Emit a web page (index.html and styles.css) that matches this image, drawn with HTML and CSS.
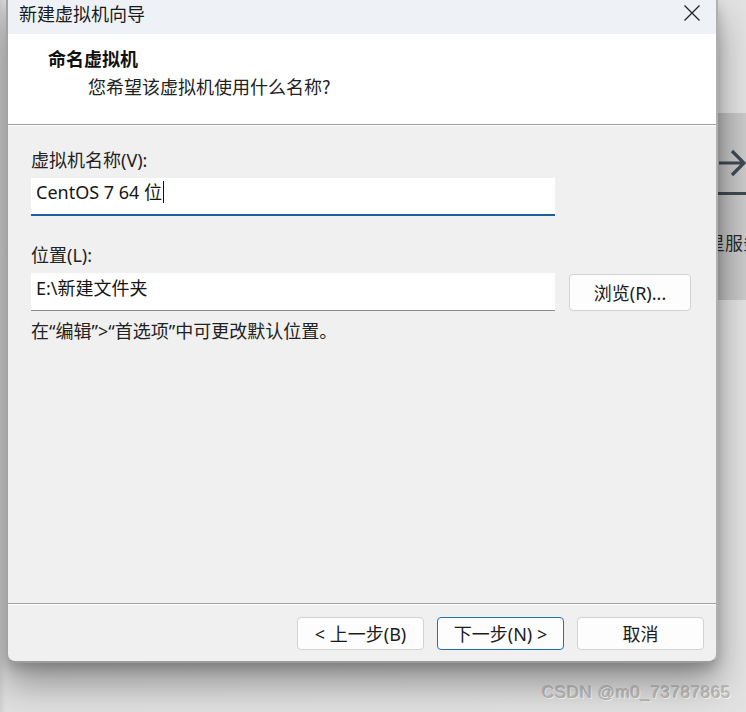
FILE: index.html
```html
<!DOCTYPE html>
<html lang="zh-CN">
<head>
<meta charset="utf-8">
<title>新建虚拟机向导</title>
<link rel="stylesheet" href="styles.css">
</head>
<body>
<div class="screen">
  <div class="behind">
    <svg class="behind-arrow" width="29" height="50" viewBox="0 0 29 50">
      <path d="M2 16 H26 M15 4 L27 16 L15 28" fill="none" stroke="#3e4954" stroke-width="3.2"/>
      <rect x="1" y="45" width="28" height="3" fill="#3e4954"/>
    </svg>
    <div class="behind-text">星服务</div>
  </div>

  <div class="dialog">
    <div class="titlebar">
      <span class="title">新建虚拟机向导</span>
      <svg class="close" width="18" height="18" viewBox="0 0 18 18">
        <path d="M1.5 1.5 L16.5 16.5 M16.5 1.5 L1.5 16.5" stroke="#222" stroke-width="1.3" fill="none"/>
      </svg>
    </div>
    <div class="header">
      <div class="heading">命名虚拟机</div>
      <div class="subheading">您希望该虚拟机使用什么名称?</div>
    </div>
    <div class="content">
      <div class="label">虚拟机名称(V):</div>
      <div class="field field-focus"><span class="value">CentOS 7 64 位</span><span class="caret"></span></div>
      <div class="label label-loc">位置(L):</div>
      <div class="row">
        <div class="field"><span class="value">E:\新建文件夹</span></div>
        <div class="btn btn-browse">浏览(R)...</div>
      </div>
      <div class="hint">在“编辑”&gt;“首选项”中可更改默认位置。</div>
    </div>
    <div class="footer">
      <div class="btn">&lt; 上一步(B)</div>
      <div class="btn btn-default">下一步(N) &gt;</div>
      <div class="btn">取消</div>
    </div>
  </div>

  <div class="watermark">CSDN @m0_73787865</div>
</div>
</body>
</html>
```

FILE: styles.css
```css
* { box-sizing: border-box; }

html, body {
  margin: 0;
  padding: 0;
}

body {
  width: 746px;
  height: 712px;
  overflow: hidden;
  background: #e9e9e9;
  font-family: "Noto Sans", "Noto Sans CJK SC", sans-serif;
  color: #1c1c1c;
}

.screen {
  position: relative;
  width: 746px;
  height: 712px;
  background: linear-gradient(90deg, #d0d0d0 0px, #e0e0e0 6px, #e2e2e2 100%);
}

.behind {
  position: absolute;
  left: 717px;
  top: 113px;
  width: 29px;
  height: 187px;
  background: linear-gradient(90deg, #bdbdbd, #cacaca);
  overflow: hidden;
}

.behind-arrow {
  display: block;
  margin-top: 34px;
}

.behind-text {
  margin-left: -10px;
  margin-top: 35px;
  width: 60px;
  font-family: "Noto Sans CJK SC", sans-serif;
  font-size: 18px;
  line-height: 20px;
  color: #2a2a2a;
  white-space: nowrap;
}

.dialog {
  position: relative;
  z-index: 1;
  margin-left: 6px;
  width: 712px;
  height: 663px;
  display: flex;
  flex-direction: column;
  background: #f0f0f0;
  border-left: 2px solid #a3a3a3;
  border-right: 2px solid #b0b0b0;
  border-bottom: 2px solid #9c9c9c;
  border-radius: 0 0 9px 9px;
  box-shadow: 0 20px 36px rgba(0, 0, 0, 0.36), 0 5px 12px rgba(0, 0, 0, 0.18);
}

.titlebar {
  height: 34px;
  flex: none;
  display: flex;
  align-items: center;
  justify-content: space-between;
  padding: 0 15px 0 11px;
  background: #eef2f7;
}

.title {
  font-family: "Noto Sans CJK SC", sans-serif;
  font-size: 18px;
  line-height: 20px;
  margin-top: -8px;
  color: #1a1a1a;
}

.close {
  margin-top: -8px;
}

.header {
  height: 91px;
  flex: none;
  background: #ffffff;
  border-bottom: 1px solid #a2a2a2;
  padding: 13px 0 0 40px;
}

.heading {
  font-family: "Noto Sans CJK SC", sans-serif;
  font-weight: 700;
  font-size: 18px;
  line-height: 22px;
  color: #111;
}

.subheading {
  margin-top: 6px;
  padding-left: 40px;
  font-family: "Noto Sans CJK SC", sans-serif;
  font-size: 18px;
  line-height: 22px;
  color: #222;
}

.content {
  flex: 1;
  padding: 24px 0 0 23px;
  box-shadow: inset 0 1px 0 #ffffff;
}

.label {
  font-size: 18px;
  line-height: 22px;
  color: #222;
}

.label-loc {
  margin-top: 28px;
}

.field {
  width: 524px;
  height: 38px;
  margin-top: 7px;
  background: #fff;
  border-bottom: 1px solid #8d8d8d;
  display: flex;
  align-items: center;
  padding-left: 5px;
}

.field-focus {
  border-bottom: 2px solid #1c5f9e;
  padding-bottom: 1px;
}

.value {
  font-size: 18px;
  line-height: 22px;
  color: #151515;
  margin-top: -8px;
}

.caret {
  display: inline-block;
  width: 1px;
  height: 22px;
  background: #111;
  margin-top: -8px;
  margin-left: 1px;
}

.row {
  display: flex;
  align-items: flex-start;
  gap: 14px;
}

.btn {
  width: 127px;
  height: 33px;
  display: flex;
  align-items: center;
  justify-content: center;
  background: #fdfdfd;
  border: 1px solid #d2d2d2;
  border-radius: 4px;
  font-size: 18px;
  line-height: 22px;
  color: #1c1c1c;
}

.btn-browse {
  width: 122px;
  height: 37px;
  margin-top: 8px;
}

.btn-default {
  border-color: #2170b8;
}

.hint {
  margin-top: 9px;
  font-size: 18px;
  line-height: 22px;
  color: #222;
}

.footer {
  height: 58px;
  flex: none;
  border-top: 1px solid #a2a2a2;
  box-shadow: inset 0 1px 0 #ffffff;
  display: flex;
  justify-content: flex-end;
  gap: 13px;
  padding: 13px 12px 0 0;
}

.watermark {
  position: absolute;
  right: 15px;
  top: 683px;
  font-family: "Liberation Sans", sans-serif;
  font-size: 17px;
  letter-spacing: 0.6px;
  line-height: 20px;
  color: #b9b9b9;
  text-shadow: 1px 1px 0 rgba(255, 255, 255, 0.85), -1px -1px 0 rgba(110, 110, 110, 0.3);
}
```
